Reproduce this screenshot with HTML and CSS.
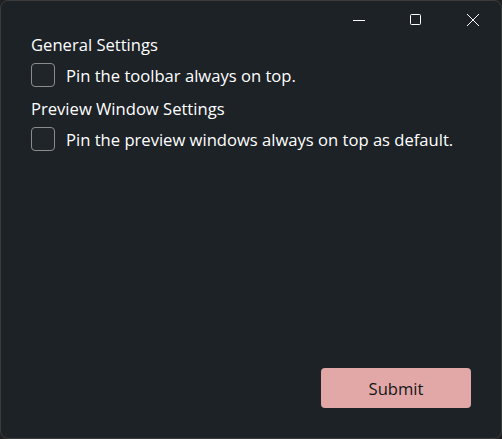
FILE: index.html
```html
<!DOCTYPE html>
<html>
<head>
<meta charset="utf-8">
<link rel="stylesheet" href="styles.css">
</head>
<body>
<div class="window">
  <div class="titlebar">
    <div class="cap-btn">
      <svg width="14" height="14" viewBox="0 0 14 14"><path d="M1 7.5H13" stroke="#fff" stroke-width="1"/></svg>
    </div>
    <div class="cap-btn">
      <svg width="14" height="14" viewBox="0 0 14 14"><rect x="1.5" y="1.5" width="10" height="10" rx="1" fill="none" stroke="#fff" stroke-width="1"/></svg>
    </div>
    <div class="cap-btn">
      <svg width="14" height="14" viewBox="0 0 14 14"><path d="M1 1L13 13M13 1L1 13" stroke="#fff" stroke-width="1"/></svg>
    </div>
  </div>
  <div class="content">
    <div class="heading">General Settings</div>
    <label class="row"><span class="box"></span><span class="label">Pin the toolbar always on top.</span></label>
    <div class="heading second">Preview Window Settings</div>
    <label class="row"><span class="box"></span><span class="label">Pin the preview windows always on top as default.</span></label>
    <div class="actions">
      <button class="submit">Submit</button>
    </div>
  </div>
</div>
</body>
</html>
```
FILE: styles.css
```css
html, body {
  margin: 0;
  padding: 0;
  background: #202020;
}
body {
  width: 502px;
  height: 439px;
  font-family: "Open Sans", "Noto Sans", sans-serif;
  color: #ffffff;
}
.window {
  box-sizing: border-box;
  width: 502px;
  height: 439px;
  background: #1c2226;
  border: 1px solid #3c3c3c;
  border-radius: 8px;
  display: flex;
  flex-direction: column;
}
.titlebar {
  display: flex;
  justify-content: flex-end;
  height: 37px;
  flex: none;
}
.cap-btn {
  width: 57px;
  height: 37px;
  display: flex;
  align-items: center;
  justify-content: center;
}
.content {
  flex: 1;
  display: flex;
  flex-direction: column;
  padding: 0 30px 30px 30px;
}
.heading {
  font-size: 16.6px;
  line-height: 22px;
  margin-top: -4px;
}
.heading.second {
  margin-top: 7px;
}
.row {
  display: flex;
  align-items: center;
  height: 32px;
  margin-top: 3px;
  gap: 11px;
  font-size: 16.6px;
}
.box {
  box-sizing: border-box;
  width: 24px;
  height: 24px;
  border: 1px solid #8c8c8c;
  border-radius: 4px;
  background: #1f2528;
  flex: none;
}
.actions {
  margin-top: auto;
  display: flex;
  justify-content: flex-end;
}
.submit {
  width: 150px;
  height: 40px;
  border: none;
  border-radius: 4px;
  background: #e2a8a8;
  color: #161616;
  font-family: "Open Sans", "Noto Sans", sans-serif;
  font-size: 16.6px;
  padding: 0;
}
```
